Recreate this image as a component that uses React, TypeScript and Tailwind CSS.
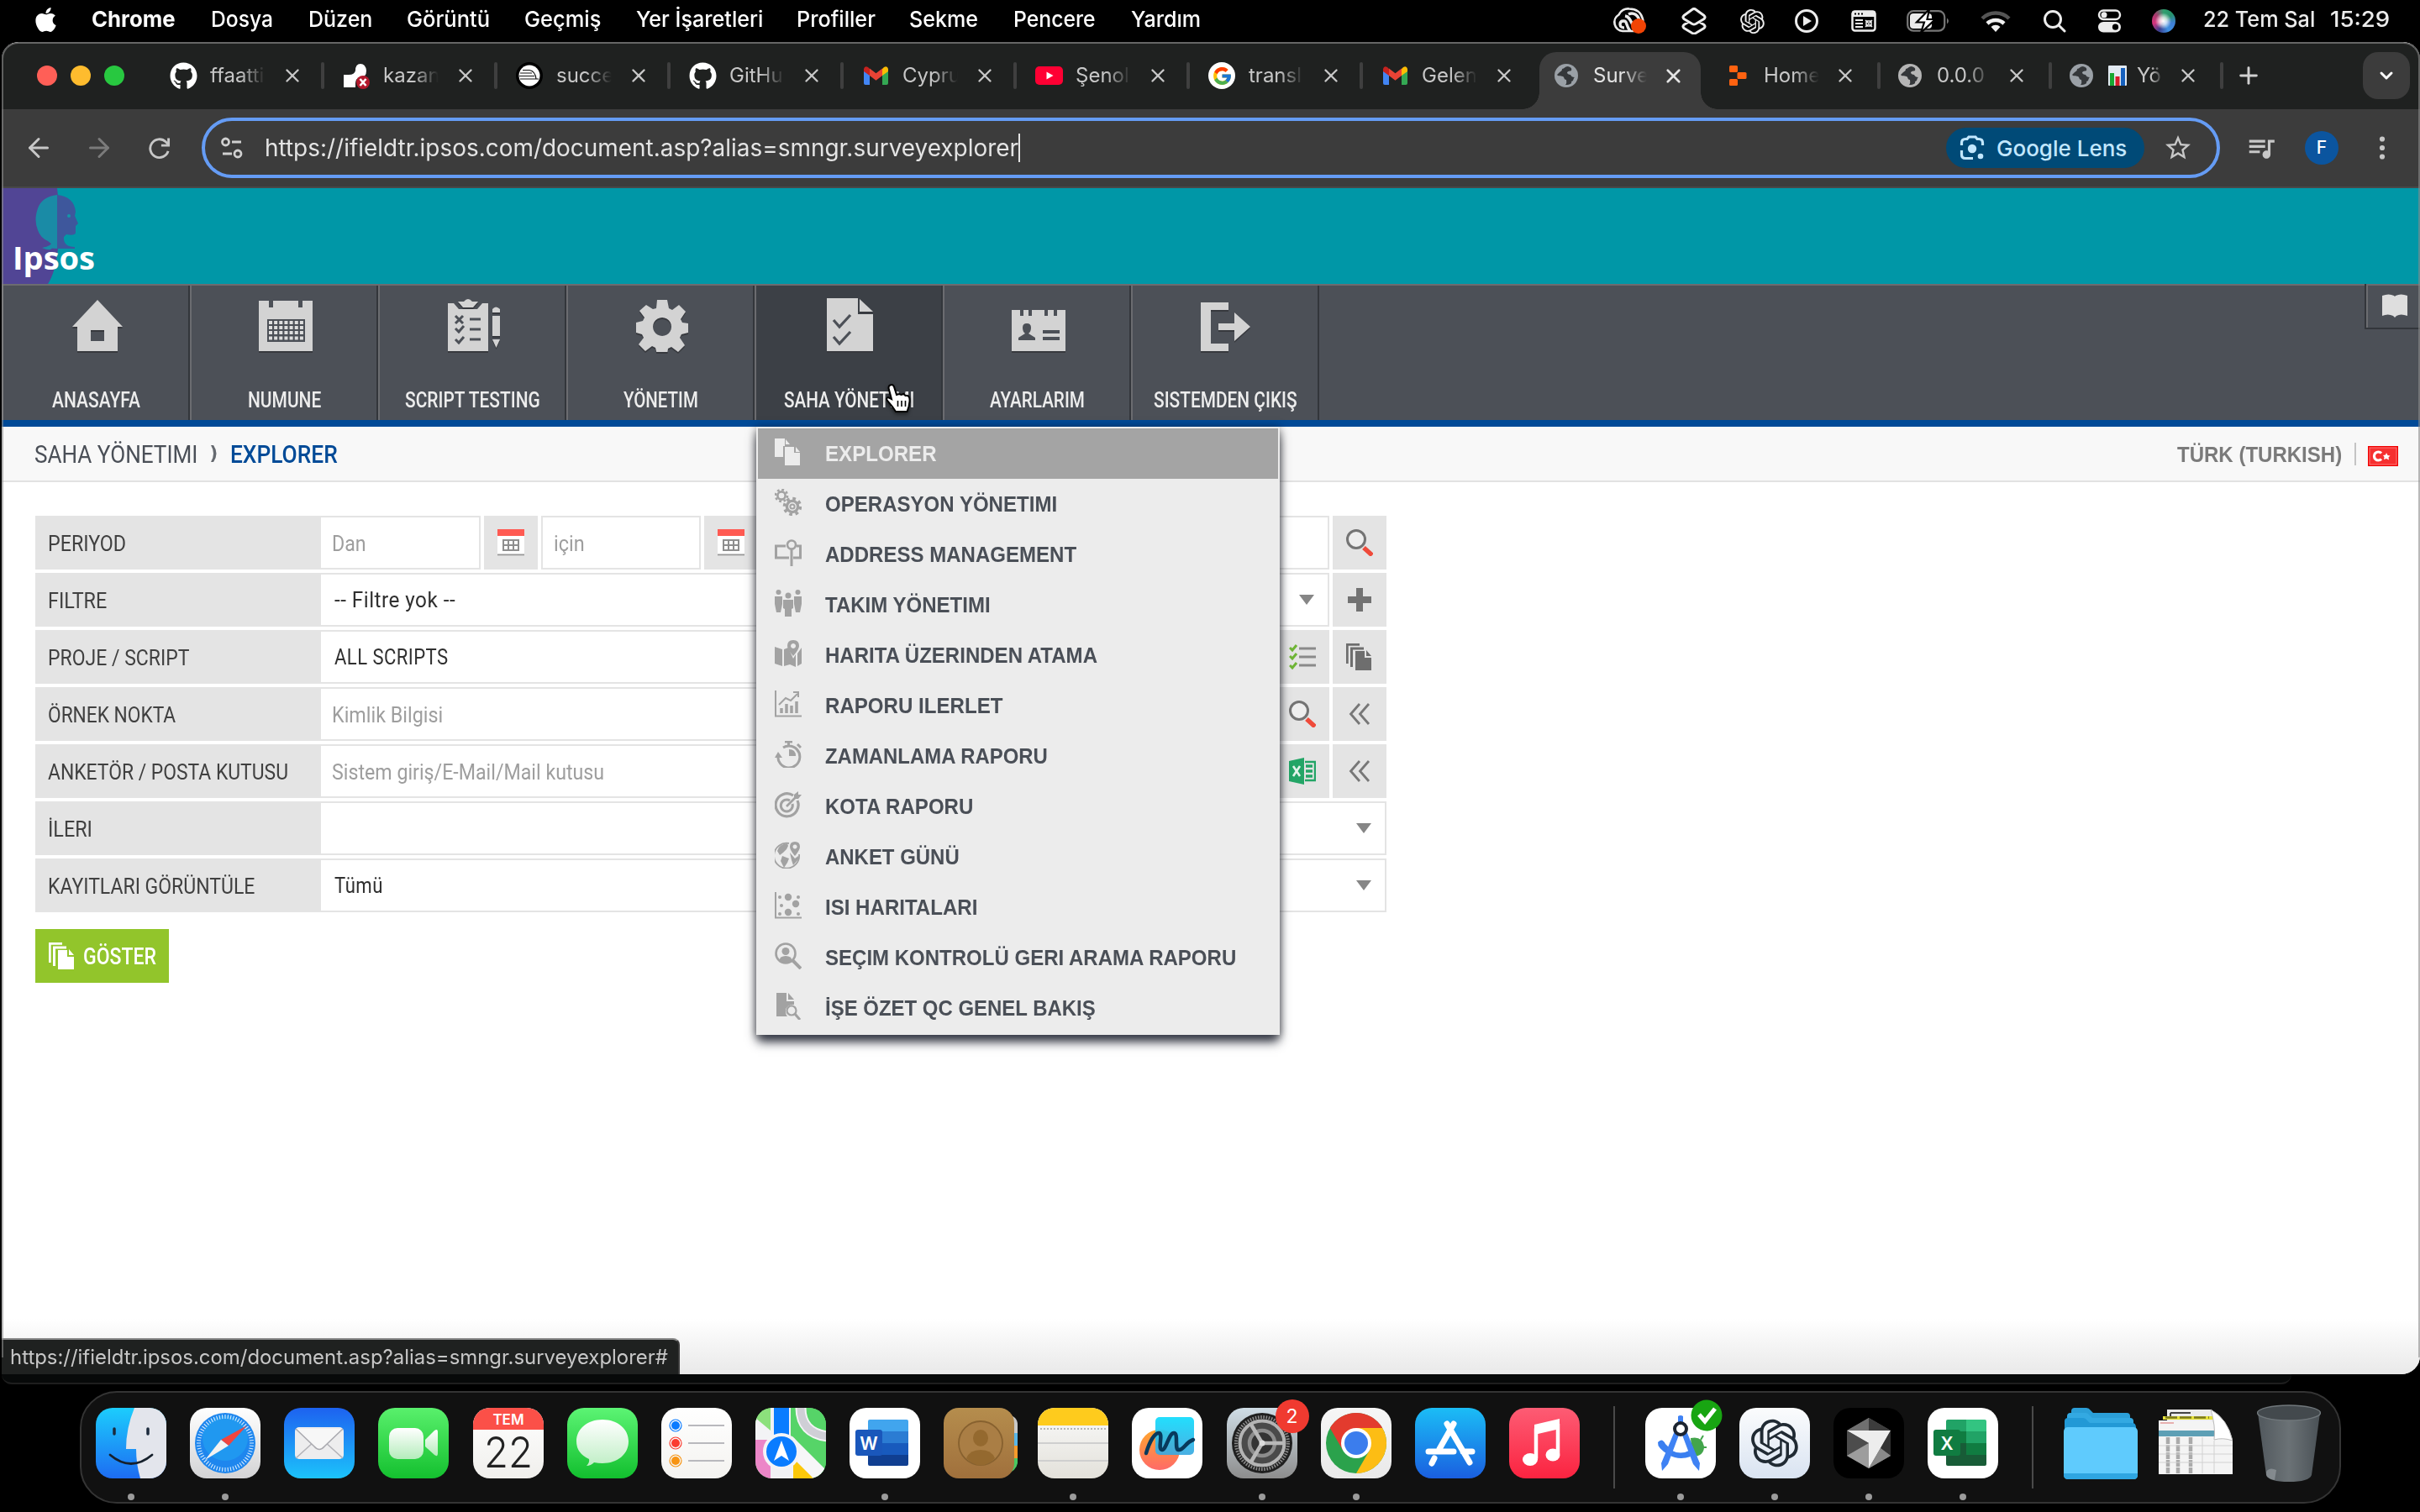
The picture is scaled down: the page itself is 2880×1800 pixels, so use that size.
import { useLayoutEffect, useRef, type ReactNode } from "react";
import { FaApple, FaGithub } from "react-icons/fa";
import { FcGoogle } from "react-icons/fc";
import { MdQueueMusic, MdStarBorder } from "react-icons/md";
import { RiOpenaiFill } from "react-icons/ri";
import { ArrowLeft, ArrowRight, ChevronDown, Plus, X } from "lucide-react";

/* One line of text, condensed or stretched to a given width. */
function T({ w, className = "", children }: { w: number; className?: string; children: ReactNode }) {
  const ref = useRef<HTMLSpanElement>(null);
  useLayoutEffect(() => {
    const el = ref.current;
    if (el) el.style.transform = `scaleX(${w / el.offsetWidth})`;
  }, [w]);
  return (
    <span className={`block shrink-0 ${className}`} style={{ width: w }}>
      <span ref={ref} className="inline-block origin-left whitespace-nowrap">
        {children}
      </span>
    </span>
  );
}

/* ---------- macOS menu bar ---------- */

const menus: [string, number, string][] = [
  ["Chrome", 100, "ml-[38px] font-bold"],
  ["Dosya", 74, "ml-[42px]"],
  ["Düzen", 76, "ml-[42px]"],
  ["Görüntü", 99, "ml-[41px]"],
  ["Geçmiş", 91, "ml-[41px]"],
  ["Yer İşaretleri", 151, "ml-[42px]"],
  ["Profiller", 94, "ml-[40px]"],
  ["Sekme", 82, "ml-[40px]"],
  ["Pencere", 98, "ml-[42px]"],
  ["Yardım", 83, "ml-[42px]"],
];

function MenuBar() {
  return (
    <header className="flex h-[50px] shrink-0 items-center pb-[4px] text-[26px] leading-[40px] font-medium text-white">
      <FaApple className="mt-[1px] ml-[38px] size-[33px] shrink-0" />
      {menus.map(([label, w, cls]) => (
        <T key={label} w={w} className={cls}>
          {label}
        </T>
      ))}
      <div className="mt-[4px] ml-auto flex items-center text-[#ececec]">
        <svg className="h-[34px] w-[42px]" viewBox="0 0 42 34">
          <path d="M12 29a10.500 10.500 0 0 1-4.500-19.500A12 12 0 0 1 20 2.500c9 0 14 5 16 12 2 8-2 14.500-10 14.500z" fill="none" stroke="#eaeaea" strokeWidth="2.600" />
          <path d="M21 29c-6-8-3-12-8-12-3 0-4 2-4 4 0 3 3 4 5 4M27 26c-5-5-5-14-12-15M19 9c6-3 12 1 13 8" fill="none" stroke="#eaeaea" strokeWidth="3.400" />
          <circle cx="31" cy="23" r="9" fill="#f24405" />
        </svg>
        <svg className="ml-[39px] size-[32px]" viewBox="0 0 32 32" fill="none" stroke="currentColor" strokeWidth="3" strokeLinejoin="round">
          <path d="M14 2.200q2-1.500 4 0l10 7.300q2 2 0 4l-10 6q-2 1-4 0l-10-6q-2-2 0-4zM9 17.500l-5 3q-2 2 0 4l10 6q2 1 4 0l10-6q2-2 0-4l-5-3" />
        </svg>
        <RiOpenaiFill className="ml-[36px] size-[35px]" />
        <svg className="ml-[32px] size-[30px]" viewBox="0 0 30 30">
          <circle cx="15" cy="15" r="12.500" fill="none" stroke="currentColor" strokeWidth="3" />
          <path d="M11 9v12l10-6z" fill="currentColor" />
        </svg>
        <svg className="ml-[38px] h-[26px] w-[30px]" viewBox="0 0 30 26">
          <rect x="1.500" y="1.500" width="27" height="23" rx="3" fill="none" stroke="currentColor" strokeWidth="2.500" />
          <path d="M1 3q0-2 2-2h24q2 0 2 2v5H1z" fill="currentColor" />
          <path d="M4 4.500h2m2 0h2m2 0h2" stroke="#000" strokeWidth="2" />
          <path d="M5 12h9M5 16h9M5 20h9" stroke="currentColor" strokeWidth="2.200" />
          <path d="M18 13h6v6h-6zM17 12l8 8m-8 0 8-8" fill="none" stroke="currentColor" strokeWidth="1.500" />
        </svg>
        <svg className="ml-[36px] h-[28px] w-[52px]" viewBox="0 0 52 28">
          <rect x="1.200" y="2.200" width="44" height="23.500" rx="7" fill="none" stroke="#777" strokeWidth="2.200" />
          <path d="M48 10.500q4 3.500 0 7z" fill="#777" />
          <rect x="4" y="5" width="26" height="18" rx="4" fill="currentColor" />
          <path d="M27 0 12 15.500h9L17 28 34 12h-9.500z" fill="#fff" stroke="#000" strokeWidth="2.200" />
        </svg>
        <svg className="ml-[36px] h-[27px] w-[36px]" viewBox="0 0 36 27" fill="none" strokeLinecap="butt" strokeWidth="4.500">
          <path d="M2 10a23 23 0 0 1 32 0" stroke="#555" />
          <path d="M8 16a14.500 14.500 0 0 1 20 0" stroke="#f0f0f0" />
          <path d="M12.500 20a8 8 0 0 1 11 0L18 26z" fill="#f0f0f0" />
        </svg>
        <svg className="ml-[38px] size-[28px]" viewBox="0 0 28 28" fill="none" stroke="currentColor" strokeWidth="3" strokeLinecap="round">
          <circle cx="12" cy="12" r="9.500" />
          <path d="m19 19 7 7" />
        </svg>
        <svg className="ml-[37px] h-[28px] w-[29px]" viewBox="0 0 29 28">
          <rect x="2" y="1.500" width="25" height="10.500" rx="5.200" fill="none" stroke="currentColor" strokeWidth="2.500" />
          <circle cx="8" cy="6.700" r="3.500" fill="currentColor" />
          <rect x="1" y="15" width="27" height="12.500" rx="6.200" fill="currentColor" />
          <circle cx="21.500" cy="21.200" r="3.600" fill="#000" />
        </svg>
        <span className="ml-[36px] size-[28px] rounded-full bg-[radial-gradient(circle_at_48%_50%,#ffffff_0%,rgba(255,255,255,0.7)_22%,transparent_48%),conic-gradient(from_0deg,#2fa06f,#27926c,#3f7fd6,#3f8fe0,#3b3f8f,#d6337c,#a53a6c,#2fa06f)]" />
        <T w={133} className="-mt-[4px] ml-[33px]">22 Tem Sal</T>
        <T w={71} className="-mt-[4px] mr-[36px] ml-[18px]">15:29</T>
      </div>
    </header>
  );
}

/* ---------- Chrome tabs ---------- */

function Globe({ color }: { color: string }) {
  return (
    <svg className="size-[30px]" viewBox="0 0 30 30">
      <circle cx="15" cy="15" r="14" fill={color} />
      <path d="M17 4c-4 0-4 3-7 3 0 3-2 3-3 4l-3 3c1 2 4 1 7 2 2 1 1 4 4 4 0 2 1 4-1 6 6 0 8-2 7-4 3 0 2-4 4-5-3 0-4-1-5-3-2 0-3-1-4-2 0-3 4-2 5-3 1-3-1-4-4-5z" fill="#34373a" />
    </svg>
  );
}
function Gmail() {
  return (
    <svg className="h-[22px] w-[29px]" viewBox="0 0 29 22">
      <path d="M0 3v17q0 2 2 2h5V9z" fill="#4285f4" />
      <path d="M29 3v17q0 2-2 2h-5V9z" fill="#34a853" />
      <path d="M22 3v8l7-5V3q-1-4-5-2z" fill="#fbbc04" />
      <path d="M0 3v3l7 5V3L5 1Q1-1 0 3z" fill="#c5221f" />
      <path d="M7 2.500v8.500l7.500 5.700L22 11V2.500l-7.500 5.700z" fill="#ea4335" />
    </svg>
  );
}

const tabs: { icon: ReactNode; label: string; sep?: boolean }[] = [
  { icon: <FaGithub className="size-[33px] text-white" />, label: "ffaatti", sep: true },
  {
    icon: (
      <svg className="size-[32px]" viewBox="0 0 32 32">
        <path d="M15 10q0-8 6-8t7 8q0 8-7 8-6 1-6 7v5H1V15h6q7 0 8-5z" fill="#fff" />
        <circle cx="24" cy="24" r="8" fill="#b3192c" />
        <path d="m20.500 20 7 8m0-8-7 8" stroke="#fff" strokeWidth="2.600" />
      </svg>
    ),
    label: "kazan",
    sep: true,
  },
  {
    icon: (
      <svg className="size-[32px]" viewBox="0 0 32 32">
        <circle cx="16" cy="16" r="16" fill="#000" />
        <circle cx="16" cy="16" r="12.500" fill="#fff" />
        <path d="M5 13h14M4 16.500h18M5 20h22M8 9.500h8q7 1 8 10.500" fill="none" stroke="#111" strokeWidth="1.200" />
      </svg>
    ),
    label: "succe",
    sep: true,
  },
  { icon: <FaGithub className="size-[33px] text-white" />, label: "GitHu", sep: true },
  { icon: <Gmail />, label: "Cypru", sep: true },
  {
    icon: (
      <svg className="h-[22px] w-[33px]" viewBox="0 0 33 22">
        <rect width="33" height="22" rx="5" fill="#ff0033" />
        <path d="M13.500 6.500v9l8-4.500z" fill="#fff" />
      </svg>
    ),
    label: "Şenol",
    sep: true,
  },
  {
    icon: (
      <span className="flex size-[32px] items-center justify-center rounded-full bg-white">
        <FcGoogle className="size-[25px]" />
      </span>
    ),
    label: "transl",
    sep: true,
  },
  { icon: <Gmail />, label: "Gelen" },
];

function TabText({ children, className = "w-[66px] text-[#c7c7c7]" }: { children: ReactNode; className?: string }) {
  return (
    <span className={`text-[24px] whitespace-nowrap [mask-image:linear-gradient(to_right,black_55%,transparent)] ${className}`}>
      {children}
    </span>
  );
}
function Close() {
  return <X className="size-[26px] shrink-0 text-[#c7c7c7]" strokeWidth={2.2} />;
}

function TabStrip() {
  return (
    <div className="flex h-[78px] shrink-0 items-start bg-[#1f2120]">
      <div className="flex h-[76px] w-[178px] shrink-0 items-center gap-[16px] pl-[42px]">
        <i className="size-[24px] rounded-full bg-[#ff5f57]" />
        <i className="size-[24px] rounded-full bg-[#febc2e]" />
        <i className="size-[24px] rounded-full bg-[#28c840]" />
      </div>
      {tabs.map((t, i) => (
        <div key={i} className="flex h-[76px] w-[206px] shrink-0 items-center pl-[21px]">
          <span className="flex w-[34px] shrink-0 justify-center">{t.icon}</span>
          <span className="ml-[15px] flex w-[66px]">
            <TabText>{t.label}</TabText>
          </span>
          <span className="ml-[19px]">
            <Close />
          </span>
          {t.sep && <i className="ml-auto h-[32px] w-[4px] rounded-sm bg-[#3f3f3f]" />}
        </div>
      ))}
      <div className="relative mt-[10px] mr-[7px] ml-[4px] flex h-[68px] w-[192px] shrink-0 items-center rounded-t-[20px] bg-[#3c3c3c] pb-[12px] pl-[17px]">
        <i className="absolute bottom-0 -left-[20px] size-[20px] bg-[radial-gradient(circle_at_0_0,#1f2120_19.5px,#3c3c3c_20px)]" />
        <i className="absolute -right-[20px] bottom-0 size-[20px] bg-[radial-gradient(circle_at_100%_0,#1f2120_19.5px,#3c3c3c_20px)]" />
        <Globe color="#9aa0a6" />
        <TabText className="ml-[17px] w-[64px] text-[#e3e3e3]">Surve</TabText>
        <X className="ml-[18px] size-[27px] text-[#e3e3e3]" strokeWidth={2.4} />
      </div>
      <div className="flex h-[76px] w-[207px] shrink-0 items-center pl-[27px]">
        <svg className="h-[24px] w-[21px]" viewBox="0 0 21 24" fill="#ff6210">
          <rect width="10" height="8" rx="1.500" />
          <rect x="9.500" y="8" width="11" height="8" rx="1.500" />
          <rect y="16" width="10" height="8" rx="1.500" />
        </svg>
        <TabText className="ml-[20px] w-[66px] text-[#c7c7c7]">Home</TabText>
        <span className="ml-[18px]"><Close /></span>
        <i className="ml-auto h-[32px] w-[4px] rounded-sm bg-[#3f3f3f]" />
      </div>
      <div className="flex h-[76px] w-[204px] shrink-0 items-center pl-[20px]">
        <Globe color="#b5b5b5" />
        <TabText className="ml-[17px] w-[65px] text-[#c7c7c7]">0.0.0</TabText>
        <span className="ml-[17px]"><Close /></span>
        <i className="ml-auto h-[32px] w-[4px] rounded-sm bg-[#3f3f3f]" />
      </div>
      <div className="flex h-[76px] w-[204px] shrink-0 items-center pl-[20px]">
        <Globe color="#9aa0a6" />
        <svg className="ml-[17px] h-[24px] w-[22px]" viewBox="0 0 22 24">
          <rect width="22" height="24" rx="1" fill="#e2eaf2" />
          <path d="M2 9h5v15H2z" fill="#17a832" />
          <path d="M8.500 13h5v11h-5z" fill="#d81b2a" />
          <path d="M15 3h5v21h-5z" fill="#1560bd" />
        </svg>
        <TabText className="ml-[12px] w-[31px] text-[#c7c7c7]">Yö</TabText>
        <span className="ml-[17px]"><Close /></span>
        <i className="ml-auto h-[32px] w-[4px] rounded-sm bg-[#3f3f3f]" />
      </div>
      <div className="flex h-[76px] items-center pl-[14px]">
        <Plus className="size-[32px] text-[#d0d0d0]" strokeWidth={2.2} />
      </div>
      <div className="mt-[10px] mr-[12px] ml-auto flex size-[56px] items-center justify-center rounded-[18px] bg-[#3c3c3c]">
        <ChevronDown className="size-[24px] text-white" strokeWidth={3} />
      </div>
    </div>
  );
}

function Toolbar() {
  return (
    <div className="flex h-[94px] shrink-0 items-center border-b-2 border-[#484848] bg-[#3c3c3c] text-[#c7c7c7]">
      <ArrowLeft className="ml-[26px] size-[36px]" strokeWidth={2} />
      <ArrowRight className="ml-[36px] size-[36px] text-[#7b7b7b]" strokeWidth={2} />
      <svg className="ml-[40px] size-[27px]" viewBox="0 0 28 28" fill="none" stroke="currentColor" strokeWidth="3">
        <path d="M25 17.500A11.300 11.300 0 1 1 22 6l3 3" />
        <path d="M25.500 1.500v9h-9" />
      </svg>
      <div className="ml-[37px] flex h-[72px] w-[2402px] shrink-0 items-center rounded-full border-4 border-[#659cf5]">
        <svg className="ml-[19px] size-[26px]" viewBox="0 0 26 26" fill="none" stroke="#d0d0d0" strokeWidth="2.800">
          <circle cx="5.500" cy="6" r="4" />
          <path d="M13 6h11M2 20h11" />
          <circle cx="20" cy="20" r="4" />
        </svg>
        <T w={897} className="mt-[0px] ml-[26px] text-[28px] text-[#e4e4e4]">
          https://ifieldtr.ipsos.com/document.asp?alias=smngr.surveyexplorer
        </T>
        <i className="h-[34px] w-[2px] bg-[#e4e4e4]" />
        <div className="ml-auto flex h-[48px] w-[236px] items-center rounded-[24px] bg-[#004a77] text-[#c2e7ff]">
          <svg className="ml-[16px] size-[30px]" viewBox="0 0 30 30" fill="none" stroke="currentColor" strokeWidth="3.200">
            <path d="M2.500 12V9q0-4.500 4.500-4.500h2L11 2h8l2 2.500h2q4.500 0 4.500 4.500v3M2.500 18v5q0 4.500 4.500 4.500h9" />
            <circle cx="15" cy="16" r="5.200" fill="currentColor" stroke="none" />
            <circle cx="25" cy="25" r="3.300" fill="currentColor" stroke="none" />
          </svg>
          <T w={155} className="ml-[14px] text-[26px] font-medium">Google Lens</T>
        </div>
        <MdStarBorder className="mr-[28px] ml-[22px] size-[36px]" />
      </div>
      <MdQueueMusic className="ml-[30px] size-[38px]" />
      <span className="ml-[33px] flex size-[40px] items-center justify-center rounded-full bg-[#0b559f] text-[21px] font-medium text-white">F</span>
      <svg className="ml-[48px] h-[28px] w-[8px]" viewBox="0 0 8 28" fill="currentColor">
        <circle cx="4" cy="3.500" r="3.100" />
        <circle cx="4" cy="14" r="3.100" />
        <circle cx="4" cy="24.500" r="3.100" />
      </svg>
    </div>
  );
}

/* ---------- Ipsos header and navigation ---------- */

function IpsosHeader() {
  return (
    <div className="flex h-[116px] shrink-0 border-b-2 border-[#6c6c70] bg-[#0097a7]">
      <svg className="h-[114px] w-[116px]" viewBox="0 0 116 114">
        <path d="M0 0h66q5 40 1 72-3 28-12 42H0z" fill="#514595" />
        <path d="M66 8Q48 10 43 24q-5 14 0 26 3 9 12 13l5 4q2 10-12 4h19z" fill="#1a8ba6" />
        <path d="M48 71q12-2 12-8h7v9z" fill="#1a8ba6" />
        <path d="M66 8q20 2 22 20l-1 5 4 9-3 3v8q-1 4-11 2l-3 3q-1 12 13 12v2H66z" fill="#3e579c" />
        <circle cx="80" cy="33" r="2" fill="#1497a8" />
        <text x="13" y="97" fontFamily="'Open Sans'" fontWeight="700" fontSize="38" fill="#fff" textLength="98" lengthAdjust="spacingAndGlyphs">Ipsos</text>
      </svg>
    </div>
  );
}

const etched = "[filter:drop-shadow(0_2px_0_#37393e)]";
const navItems: { label: string; w: number; art: ReactNode }[] = [
  { label: "ANASAYFA", w: 105, art: <path fillRule="evenodd" d="M32 2 2 34h6v29h48V34h6zM24 38h16v13H24z" /> },
  {
    label: "NUMUNE",
    w: 87,
    art: (
      <>
        <path d="M0 3h12v8h5V3h30v8h5V3h12v60H0z" />
        <path d="M10 25h45v27H10z" fill="#4c5057" />
        <path d="M12 29h41M12 35h41M12 41h41M12 47.500h41" stroke="#dedede" strokeWidth="4" strokeDasharray="4 2.150" />
      </>
    ),
  },
  {
    label: "SCRIPT TESTING",
    w: 161,
    art: (
      <>
        <path d="M1 6h7l6 7h22l6-7h7v57H1z" />
        <path d="M20 4q5-6 10 0h7l-6 7H19l-6-7z" />
        <path d="m10 21 9 9m0-9-9 9m0 6 4 4 6-7m-10 16 4 4 6-7M27 25h13M27 37h13M27 49h13" fill="none" stroke="#4c5057" strokeWidth="3" />
        <path d="M54 17v-4q4-5 9 0v4zM54 21h9v24h-9zM54 49h9l-4.500 10z" />
      </>
    ),
  },
  {
    label: "YÖNETIM",
    w: 89,
    art: (
      <path
        fillRule="evenodd"
        d="m26 2 12 0 2 10 4 2 8-6 8 8-6 9 2 4 7 1v11l-8 2-2 4 6 9-8 8-8-6-4 2-1 7H26l-2-8-4-2-8 6-8-8 6-8-2-4-7-2V29l8-2 2-4-6-8 8-7 8 5 4-1zM32 23a11 11 0 1 0 .1 0z"
      />
    ),
  },
  {
    label: "SAHA YÖNETIMI",
    w: 155,
    art: (
      <>
        <path d="M4 0h37v19h18v44H4z" />
        <path d="M43 1v15h16z" />
        <path d="m12 26 7 8 13-14m-20 26 7 8 13-14" fill="none" stroke="#4c5057" strokeWidth="3.200" />
      </>
    ),
  },
  {
    label: "AYARLARIM",
    w: 113,
    art: (
      <>
        <path d="M0 14h10v7h4v-7h6v7h4v-7h15v7h4v-7h7v7h4v-7h10v49H0z" />
        <path d="M18 30q5 0 5 5t-3 7l8 5v3H8v-3l8-5q-3-2-3-7t5-5zM37 38h20v4H37zM37 46h20v4H37z" fill="#4c5057" />
      </>
    ),
  },
  {
    label: "SISTEMDEN ÇIKIŞ",
    w: 171,
    art: (
      <>
        <path d="M1 5h33v9H13v40h21v9H1z" />
        <path d="M22 30h19V17l19 17-19 17V38H22z" />
      </>
    ),
  },
];

function NavIcon({ art }: { art: ReactNode }) {
  return (
    <svg className={`-mt-[1px] mb-[1px] ml-[4px] size-[64px] ${etched}`} viewBox="0 0 64 64" fill="#d3d3d3">
      {art}
    </svg>
  );
}

const S = { fill: "none", stroke: "#a2a2a2", strokeWidth: 2.6 };
const menuItems: { label: string; w: number; art: ReactNode }[] = [
  {
    label: "EXPLORER", w: 133,
    art: (
      <g fill="#ececec">
        <path d="M0 0h12v9h-2v13H0z" />
        <path d="M13 1l5 6h-5zM12 10h11v7h7v15H12z" />
        <path d="M25 10l5 6h-5z" />
      </g>
    ),
  },
  {
    label: "OPERASYON YÖNETIMI", w: 276,
    art: (
      <g {...S}>
        <circle cx="8" cy="8" r="4.600" />
        <circle cx="8" cy="8" r="7" strokeDasharray="2.800 2.700" />
        <circle cx="21" cy="21" r="6.600" strokeWidth="3.400" />
        <circle cx="21" cy="21" r="2.600" strokeWidth="2" />
        <circle cx="21" cy="21" r="9.500" strokeDasharray="3.700 3.760" strokeWidth="3.500" />
      </g>
    ),
  },
  {
    label: "ADDRESS MANAGEMENT", w: 299,
    art: (
      <g {...S}>
        <path d="M13 8H1.500v14H17M26 8h4.500v14H22M20 12v20" strokeWidth="3" />
        <circle cx="20" cy="6.500" r="5" />
      </g>
    ),
  },
  {
    label: "TAKIM YÖNETIMI", w: 197,
    art: (
      <g fill="#a2a2a2">
        <circle cx="4.500" cy="3" r="3" />
        <circle cx="27.500" cy="3" r="3" />
        <circle cx="16" cy="7" r="3.500" />
        <path d="M0 8h9v9l-2 10H2L0 17zM23 8h9v9l-2 10h-5l-2-10zM10 12h12v10l-2 1v9h-8v-9l-2-1z" />
      </g>
    ),
  },
  {
    label: "HARITA ÜZERINDEN ATAMA", w: 324,
    art: (
      <g fill="#a2a2a2">
        <path d="M0 8l9 3v20l-9-3zM11 11l5-2 6 13 3-5v15l-7-3-7 2zM27 16l5-7v19l-5 3z" />
        <path fillRule="evenodd" d="M22 0q7 0 7 7 0 4-7 12-7-8-7-12 0-7 7-7zm0 4a3 3 0 1 0 .1 0z" />
      </g>
    ),
  },
  {
    label: "RAPORU ILERLET", w: 211,
    art: (
      <g {...S}>
        <path d="M1 0v30.500h31" strokeWidth="2" />
        <path d="M8 27v-6m6 6V16m6 11V18m6 9V13" strokeWidth="3.500" />
        <path d="M5 17l8-8 6 3 8-8M22 2h6v6" strokeWidth="2" />
      </g>
    ),
  },
  {
    label: "ZAMANLAMA RAPORU", w: 265,
    art: (
      <g {...S}>
        <path d="M4 17a13 13 0 1 0 13-11q-4 0-7 2M12 1h9M16.500 1v5M27 4l4 4" strokeWidth="3" />
        <path d="M17 10v8h8q0-8-8-8z" fill="#a2a2a2" stroke="none" />
        <path d="M0 20l4-7 5 7z" fill="#a2a2a2" stroke="none" />
      </g>
    ),
  },
  {
    label: "KOTA RAPORU", w: 176,
    art: (
      <g {...S}>
        <path d="M22 5A13.500 13.500 0 1 0 27 11" strokeWidth="3.200" />
        <path d="M18 11a7 7 0 1 0 3 4" strokeWidth="3" />
        <path d="M14 18 25 7" />
        <path d="M23 9V4l5-4v4h4l-4 5z" fill="#a2a2a2" stroke="none" />
      </g>
    ),
  },
  {
    label: "ANKET GÜNÜ", w: 160,
    art: (
      <g fill="#a2a2a2">
        <path d="M17 2A15 15 0 1 0 29 15" fill="none" stroke="#a2a2a2" strokeWidth="1.800" />
        <path d="M15 2q-10 1-12 9l3 5 4-3 4-4 2-4zM9 17l8 3-2 5-4 6-4-8zM18 13l6 7 4-3 1 3-7 8-2-6z" />
        <path fillRule="evenodd" d="M24 0q6 0 6 6 0 4-6 11-6-7-6-11 0-6 6-6zm0 3.500a2.500 2.500 0 1 0 .1 0z" />
      </g>
    ),
  },
  {
    label: "ISI HARITALARI", w: 181,
    art: (
      <g fill="#a2a2a2">
        <path d="M1 0v30.500h31" fill="none" stroke="#a2a2a2" strokeWidth="2" />
        <circle cx="16" cy="6" r="4.200" />
        <circle cx="25" cy="14" r="4.200" />
        <circle cx="16" cy="24" r="4.200" />
        <circle cx="6" cy="6" r="2" />
        <circle cx="28" cy="6" r="2" />
        <circle cx="8" cy="16" r="2" />
        <circle cx="6" cy="26" r="2" />
        <circle cx="28" cy="26" r="2" />
      </g>
    ),
  },
  {
    label: "SEÇIM KONTROLÜ GERI ARAMA RAPORU", w: 489,
    art: (
      <g {...S}>
        <circle cx="13" cy="13" r="11.500" />
        <path d="m21 21 10 10" strokeWidth="4" />
        <circle cx="13" cy="10.500" r="4.500" fill="#a2a2a2" stroke="none" />
        <path d="M5 22q1-6 8-6t8 6q-8 6-16 0z" fill="#a2a2a2" stroke="none" />
      </g>
    ),
  },
  {
    label: "İŞE ÖZET QC GENEL BAKIŞ", w: 322,
    art: (
      <g fill="#a2a2a2">
        <path d="M2 0h12v10h9v4q-10 0-10 8 0 4 2 6H2zM16 0l7 8h-7z" />
        <circle cx="20" cy="21" r="5.500" fill="none" stroke="#a2a2a2" strokeWidth="2.200" />
        <path d="m24 25 6 7" stroke="#a2a2a2" strokeWidth="3" />
      </g>
    ),
  },
];

function Dropdown() {
  return (
    <div className="absolute top-[168px] left-0 z-20 w-[623px] border-2 border-[#ececec] bg-[#ececec] shadow-[0_10px_12px_-2px_#343845,0_2px_10px_0_rgba(0,0,0,0.55)]">
      {menuItems.map((m, i) => (
        <div key={m.label} className={i === 0 ? "flex h-[60px] items-center bg-[#a4a4a4] text-[#ececec]" : "flex h-[60px] items-center text-[#4a4f57]"}>
          <svg className="-mt-[4px] ml-[20px] size-[32px]" viewBox="0 0 32 32">{m.art}</svg>
          <T w={m.w} className="ml-[28px] font-['Liberation_Sans',sans-serif] text-[25px] leading-[36px] font-bold">{m.label}</T>
        </div>
      ))}
    </div>
  );
}

function HandCursor() {
  return (
    <svg className="absolute top-[116px] left-[153px] z-30 h-[38px] w-[34px] [filter:drop-shadow(0_2px_2px_rgba(0,0,0,.5))]" viewBox="0 0 34 38">
      <path
        d="M6.500 2.500q3-1.500 4.500 2l3 9.500 3-1 2.500 1 3-1 2 2 2.500 0q3 1 2.500 7l-1 6-2 6H13l-4-6-6-7q-2-3 1-4l4 2L4.500 6q0-3 2-3.500z"
        fill="#fff" stroke="#000" strokeWidth="2"
      />
      <path d="M15.500 21v7m4.500-7v7m4.500-7v7" stroke="#000" strokeWidth="1.600" />
    </svg>
  );
}

function Nav() {
  return (
    <nav className="flex h-[168px] shrink-0 border-b-8 border-[#004a97] bg-[#4c5057]">
      {navItems.map((n, i) => (
        <div
          key={n.label}
          className={`relative flex h-[160px] w-[224px] shrink-0 flex-col items-center border-r-2 border-l-2 border-r-[#33363b] border-l-[#6b6c70] pt-[16px] ${i === 4 ? "bg-[#3c4046]" : ""}`}
        >
          <NavIcon art={n.art} />
          <T w={n.w} className="mt-[36px] font-['Roboto',sans-serif] text-[26px] leading-[40px] font-medium text-[#ededed]">{n.label}</T>
          {i === 4 && <Dropdown />}
          {i === 4 && <HandCursor />}
        </div>
      ))}
      <div className="-mt-[2px] ml-auto flex h-[54px] w-[66px] items-center border-b-2 border-l-2 border-[#33363b]">
        <i className="h-full w-[2px] bg-[#6b6c70]" />
        <svg className="ml-[16px] h-[30px] w-[32px]" viewBox="0 0 32 30">
          <path d="M1 3q8-3 14 0l1 1 1-1q6-3 14 0v24q-8-3-13 0l-2 2-2-2q-6-3-13 0z" fill="#dedede" />
        </svg>
      </div>
    </nav>
  );
}

function Breadcrumb() {
  return (
    <div className="flex h-[66px] shrink-0 items-center border-b-2 border-[#e2e2e2] bg-[#f8f8f8] font-['Roboto',sans-serif] text-[30px]">
      <T w={194} className="ml-[39px] text-[#4a4f57]">SAHA YÖNETIMI</T>
      <svg className="ml-[15px] h-[22px] w-[9px]" viewBox="0 0 9 22">
        <path d="M1 1q6 10 0 20h3q7-10 0-20z" fill="#666a70" />
      </svg>
      <T w={128} className="ml-[15px] font-medium text-[#004a97]">EXPLORER</T>
      <T w={196} className="mt-[4px] ml-auto font-['Liberation_Sans',sans-serif] text-[25px] font-bold text-[#7b7b7b]">TÜRK (TURKISH)</T>
      <i className="ml-[15px] h-[27px] w-[2px] bg-[#c4c4c4]" />
      <svg className="mt-[5px] mr-[26px] ml-[14px] h-[24px] w-[36px]" viewBox="0 0 36 24">
        <rect width="36" height="24" fill="#f00000" />
        <rect x="2" y="2" width="32" height="20" fill="#f63030" stroke="#ff7070" strokeWidth="1.200" />
        <path d="M16 8.500a5 5 0 1 0 0 7" fill="none" stroke="#fff" strokeWidth="3.200" />
        <path d="m22 8 1.500 3 3 .5-2 2 .5 3-3-1.500-3 1 .5-3-1.500-2 3-.5z" fill="#fff" />
      </svg>
    </div>
  );
}

/* ---------- Filter form ---------- */

function Label({ w, children }: { w: number; children: ReactNode }) {
  return (
    <div className="flex h-[64px] w-[338px] shrink-0 items-center bg-[#e4e4e4] pt-[2px] pl-[15px] text-[26px] text-[#404040]">
      <T w={w}>{children}</T>
    </div>
  );
}
function Field({ className = "flex-1", text, w = 0, hint = false, arrow = false }: { className?: string; text?: string; w?: number; hint?: boolean; arrow?: boolean }) {
  return (
    <div className={`flex h-[64px] items-center border-2 border-[#e4e4e4] bg-white text-[26px] ${className}`}>
      {text && <T w={w} className={hint ? "mt-[2px] ml-[13px] text-[#9e9e9e]" : "ml-[16px] tracking-[0.5px] text-[#303030]"}>{text}</T>}
      {arrow && (
        <svg className="mr-[16px] ml-auto h-[12px] w-[18px]" viewBox="0 0 18 12">
          <path d="M0 0h18L9 12z" fill="#868686" />
        </svg>
      )}
    </div>
  );
}
function Btn({ children }: { children: ReactNode }) {
  return <div className="ml-[4px] flex size-[64px] shrink-0 items-center justify-center bg-[#e4e4e4]">{children}</div>;
}
function CalIcon() {
  return (
    <svg className="size-[32px]" viewBox="0 0 32 32">
      <path d="M0 8h32v24H0z" fill="#fff" />
      <path d="M0 0h32v8H0z" fill="#ff5a52" />
      <path d="M0 30.500h32" stroke="#999" strokeWidth="2" />
      <path d="M7 13h18v12H7zM13 13v12M19 13v12M7 19h18" fill="none" stroke="#8e8e8e" strokeWidth="2" />
    </svg>
  );
}
function SearchIcon() {
  return (
    <svg className="size-[32px]" viewBox="0 0 32 32">
      <circle cx="12" cy="12" r="10.500" fill="#eee" stroke="#747474" strokeWidth="3" />
      <path d="m21 22 10 9" stroke="#ef4a3a" strokeWidth="5.500" />
    </svg>
  );
}
function StackIcon({ color }: { color: string }) {
  return (
    <svg className="size-[32px]" viewBox="0 0 32 32">
      <path d="M1.200 24V1.200H16M6.500 28V6H21" fill="none" stroke={color} strokeWidth="3" />
      <path d="M11 9h11v8h8v15H11zM24 8l6 7h-6z" fill={color} />
    </svg>
  );
}
function Back() {
  return (
    <svg className="h-[26px] w-[26px]" viewBox="0 0 26 26" fill="none" stroke="#777" strokeWidth="2.800">
      <path d="M13 1 2.500 13 13 25M24 1 13.500 13 24 25" />
    </svg>
  );
}

function FilterForm() {
  return (
    <div className="ml-[40px] flex w-[1608px] flex-col gap-[4px] pt-[40px] font-['Roboto',sans-serif]">
      <div className="flex">
        <Label w={93}>PERIYOD</Label>
        <Field className="w-[192px]" text="Dan" w={41} hint />
        <Btn><CalIcon /></Btn>
        <Field className="ml-[4px] w-[190px]" text="için" w={37} hint />
        <Btn><CalIcon /></Btn>
        <Field className="ml-[4px] flex-1" />
        <Btn><SearchIcon /></Btn>
      </div>
      <div className="flex">
        <Label w={70}>FILTRE</Label>
        <Field text="-- Filtre yok --" w={144} arrow />
        <Btn>
          <svg className="size-[28px]" viewBox="0 0 28 28"><path d="M10 0h8v10h10v8H18v10h-8V18H0v-8h10z" fill="#727272" /></svg>
        </Btn>
      </div>
      <div className="flex">
        <Label w={168}>PROJE / SCRIPT</Label>
        <Field text="ALL SCRIPTS" w={136} />
        <Btn>
          <svg className="size-[32px]" viewBox="0 0 32 32" fill="none">
            <path d="m1 5 3 3 5-6M1 15l3 3 5-6M1 26l3 3 5-6" stroke="#6fb536" strokeWidth="3" />
            <path d="M12 6h20M12 16h20M12 26h20" stroke="#8a8a8a" strokeWidth="2.800" />
          </svg>
        </Btn>
        <Btn><StackIcon color="#6e6e6e" /></Btn>
      </div>
      <div className="flex">
        <Label w={152}>ÖRNEK NOKTA</Label>
        <Field text="Kimlik Bilgisi" w={132} hint />
        <Btn><SearchIcon /></Btn>
        <Btn><Back /></Btn>
      </div>
      <div className="flex">
        <Label w={286}>ANKETÖR / POSTA KUTUSU</Label>
        <Field text="Sistem giriş/E-Mail/Mail kutusu" w={324} hint />
        <Btn>
          <svg className="size-[32px]" viewBox="0 0 32 32">
            <path d="M0 4 18 0v32L0 28z" fill="#23a566" />
            <path d="M19 5h12v22H19" fill="none" stroke="#23a566" strokeWidth="2.500" />
            <path d="M20 10h8m-8 6h8m-8 6h8" stroke="#23a566" strokeWidth="3.500" />
            <path d="m5 10 8 12m0-12L5 22" stroke="#e4f3ea" strokeWidth="2.600" />
          </svg>
        </Btn>
        <Btn><Back /></Btn>
      </div>
      <div className="flex">
        <Label w={53}>İLERI</Label>
        <Field arrow />
      </div>
      <div className="flex">
        <Label w={246}>KAYITLARI GÖRÜNTÜLE</Label>
        <Field text="Tümü" w={58} arrow />
      </div>
      <div className="mt-[16px] flex h-[64px] w-[159px] items-center bg-[#92c52b] pl-[16px] text-[27px] text-white">
        <StackIcon color="#ffffff" />
        <T w={87} className="mt-[2px] ml-[9px] font-medium">GÖSTER</T>
      </div>
    </div>
  );
}

/* ---------- Dock ---------- */

function Grad({ id, a, b }: { id: string; a: string; b: string }) {
  return (
    <linearGradient id={id} x1="0" y1="0" x2="0" y2="1">
      <stop offset="0" stopColor={a} />
      <stop offset="1" stopColor={b} />
    </linearGradient>
  );
}
function App84({ id, a, b, children }: { id: string; a: string; b: string; children?: ReactNode }) {
  return (
    <svg className="size-[84px]" viewBox="0 0 84 84">
      <defs>
        <Grad id={`${id}-bg`} a={a} b={b} />
        <clipPath id={`${id}-clip`}><rect width="84" height="84" rx="20" /></clipPath>
      </defs>
      <g clipPath={`url(#${id}-clip)`}>
        <rect width="84" height="84" fill={`url(#${id}-bg)`} />
        {children}
      </g>
    </svg>
  );
}
const ticks = Array.from({ length: 60 }, (_, i) => i * 6);

const mainApps: { dot?: boolean; badge?: string; art: ReactNode }[] = [
  {
    dot: true,
    art: (
      <App84 id="finder" a="#1ccdfd" b="#1d6cf2">
        <path d="M46 0Q36 24 36 49h12q0 18 5 35h31V0z" fill="#e3e5ec" />
        <path d="M22 25v6M62 25v6" stroke="#1b2a3c" strokeWidth="3.500" strokeLinecap="round" />
        <path d="M17 56q25 21 50 0" fill="none" stroke="#16202c" strokeWidth="2.800" strokeLinecap="round" />
      </App84>
    ),
  },
  {
    dot: true,
    art: (
      <App84 id="safari" a="#ffffff" b="#d3d3d5">
        <circle cx="42" cy="42" r="36" fill="#1e86ee" />
        <circle cx="42" cy="36" r="27" fill="#22a5f2" opacity=".6" />
        {ticks.map((t) => (
          <path key={t} d="M42 8v5" stroke="#d6ebff" strokeWidth="1.100" transform={`rotate(${t} 42 42)`} />
        ))}
        <path d="M68 21 37 38l9 7z" fill="#f0453f" />
        <path d="M18 62 37 38l9 7z" fill="#f2f2f2" />
      </App84>
    ),
  },
  {
    art: (
      <App84 id="mail" a="#1d62f0" b="#1cc3fb">
        <rect x="13" y="23" width="58" height="38" rx="5" fill="#ededee" />
        <path d="m14 60 22-20M70 60 48 40" stroke="#b3b3b8" strokeWidth="1.600" />
        <path d="m14 25 22 21q6 7 12 0l22-21" fill="#f7f7f7" stroke="#aaaab0" strokeWidth="1.600" />
      </App84>
    ),
  },
  {
    art: (
      <App84 id="facetime" a="#59f06c" b="#14c02f">
        <defs><Grad id="cam" a="#ffffff" b="#b4ecbb" /></defs>
        <rect x="13" y="24" width="41" height="37" rx="10" fill="url(#cam)" />
        <path d="M56 38 67 27q4-3 4 2v25q0 5-4 2L56 46z" fill="url(#cam)" />
      </App84>
    ),
  },
  {
    art: (
      <App84 id="cal" a="#ffffff" b="#f0efec">
        <path d="M0 0h84v26H0z" fill="#fb5048" />
        <text x="42" y="20" textAnchor="middle" fontFamily="Inter" fontWeight="600" fontSize="17" fill="#fff">TEM</text>
        <text x="42" y="71" textAnchor="middle" fontFamily="Inter" fontWeight="300" fontSize="51" fill="#222" textLength="58" lengthAdjust="spacingAndGlyphs">22</text>
      </App84>
    ),
  },
  {
    art: (
      <App84 id="messages" a="#5cf474" b="#12bf2e">
        <defs><Grad id="bubble" a="#ffffff" b="#bfeec5" /></defs>
        <path d="M42 14c18 0 31 11 31 26S60 66 42 66q-5 0-10-1-4 4-9 4 4-4 3-8Q11 54 11 40C11 25 24 14 42 14z" fill="url(#bubble)" />
      </App84>
    ),
  },
  {
    art: (
      <App84 id="reminders" a="#ffffff" b="#f4f3f0">
        {["#0a7bff", "#fb3b30", "#f79413"].map((c, i) => (
          <g key={c}>
            <circle cx="17" cy={21 + i * 21} r="5" fill={c} />
            <circle cx="17" cy={21 + i * 21} r="7" fill="none" stroke={c} strokeWidth="1.200" />
            <path d={`M32 ${21 + i * 21}h43`} stroke="#b9b9bd" strokeWidth="2" />
          </g>
        ))}
      </App84>
    ),
  },
  {
    art: (
      <App84 id="maps" a="#74de7a" b="#3ecb55">
        <path d="M0 0h22v35L0 22z" fill="#8ce07c" />
        <path d="m0 12 24 20v10L0 38z" fill="#f3f3f5" />
        <path d="M0 38h20v46H0z" fill="#ec86c8" />
        <path d="M18 0h32v84H18z" fill="#f1f1f4" />
        <path d="M42 0h42v84L42 34z" fill="#56d468" />
        <path d="M22 0h18v40H22z" fill="#0a7cff" />
        <path d="M54 0q0 30 32 34" fill="none" stroke="#f4f4f6" strokeWidth="13" />
        <path d="M54 0q0 30 32 34" fill="none" stroke="#cfcfd6" strokeWidth="9" />
        <path d="m44 34 42 42v10H44z" fill="#f6f6f8" />
        <path d="M45 60l24 24H45z" fill="#fcc80a" />
        <circle cx="31" cy="52" r="22" fill="#f4f4f6" />
        <circle cx="31" cy="52" r="18" fill="#0a7cff" />
        <path d="m31 39 9 24-9-6-9 6z" fill="#fff" />
      </App84>
    ),
  },
  {
    dot: true,
    art: (
      <App84 id="word" a="#ffffff" b="#ffffff">
        <path d="M22 16q0-2 2-2h44q2 0 2 2v12H22z" fill="#41a5ee" />
        <path d="M22 28h48v14H22z" fill="#2b7cd3" />
        <path d="M22 42h48v14H22z" fill="#185abd" />
        <path d="M22 56h48v11q0 2-2 2H24q-2 0-2-2z" fill="#103f91" />
        <rect x="7" y="26" width="32" height="31" rx="3" fill="#1a57bb" />
        <text x="23" y="49.500" textAnchor="middle" fontFamily="Inter" fontWeight="600" fontSize="21" fill="#fff">W</text>
      </App84>
    ),
  },
  {
    art: (
      <svg className="h-[84px] w-[88px] overflow-visible" viewBox="0 0 88 84">
        <path d="M76 8q12 2 12 12v10H76z" fill="#c9c9c9" />
        <path d="M76 30h12v15H76z" fill="#58b6e8" />
        <path d="M76 45h12v15H76z" fill="#f79a2b" />
        <path d="M76 60h12v6q-2 9-12 12z" fill="#48c862" />
        <defs><Grad id="contacts-bg" a="#b58d4d" b="#a0703c" /></defs>
        <rect width="84" height="84" rx="18" fill="url(#contacts-bg)" />
        <circle cx="44" cy="42" r="26" fill="#aa7e45" stroke="#87612f" strokeWidth="1.800" />
        <ellipse cx="44" cy="36" rx="9" ry="10" fill="#94692f" />
        <path d="M27 60q4-10 17-10t17 10q-17 17-34 0z" fill="#94692f" />
      </svg>
    ),
  },
  {
    dot: true,
    art: (
      <App84 id="notes" a="#fafafa" b="#e3e1da">
        <path d="M0 0h84v21H0z" fill="#fecb1d" />
        <path d="M3 25h80" stroke="#b5b5b5" strokeWidth="2" strokeDasharray="2 2" />
        <path d="M0 42h84M0 63h84" stroke="#cfcfcf" strokeWidth="1.800" />
      </App84>
    ),
  },
  {
    art: (
      <App84 id="freeform" a="#ffffff" b="#ffffff">
        <defs>
          <Grad id="blob" a="#ffa62e" b="#ff6a68" />
          <Grad id="sheet" a="#0fdcfd" b="#3aa8e0" />
        </defs>
        <circle cx="33" cy="50" r="24" fill="url(#blob)" />
        <rect x="28" y="11" width="46" height="45" rx="5" fill="url(#sheet)" opacity=".92" />
        <path d="M17 54c4-14 10-24 15-24 6 0-2 20 4 20 5 0 8-20 14-20s0 21 6 20c6 0 8-9 17-12" fill="none" stroke="#083a5c" strokeWidth="4.500" strokeLinecap="round" />
      </App84>
    ),
  },
  {
    dot: true,
    badge: "2",
    art: (
      <App84 id="settings" a="#cfdde6" b="#8d8d8d">
        <circle cx="42" cy="42" r="36" fill="#1f1f1f" />
        <circle cx="42" cy="42" r="31" fill="none" stroke="#8a8a8a" strokeWidth="4" strokeDasharray="1.600 1.600" />
        <circle cx="42" cy="42" r="26.500" fill="#4a4a4a" stroke="#b4b4b4" strokeWidth="4" />
        <circle cx="42" cy="42" r="15" fill="#333" stroke="#8c8c8c" strokeWidth="4.500" />
        <path d="M42 42h26M42 42 29 20M42 42 29 64" stroke="#b8b8b8" strokeWidth="4.500" />
        <circle cx="42" cy="42" r="3.500" fill="#ddd" />
      </App84>
    ),
  },
  {
    dot: true,
    art: (
      <App84 id="chrome" a="#f6f6f6" b="#e9e9e9">
        <circle cx="42" cy="42" r="36" fill="#2ba24c" />
        <path d="M10.800 24A36 36 0 0 1 73.200 24H42L26.400 51z" fill="#e33b2e" />
        <path d="M73.200 24A36 36 0 0 1 42 78L57.600 51 42 24z" fill="#fdbd14" />
        <circle cx="42" cy="42" r="18" fill="#fff" />
        <circle cx="42" cy="42" r="14" fill="#3b7ded" />
      </App84>
    ),
  },
  {
    art: (
      <App84 id="appstore" a="#1bbdf6" b="#1a5fe0">
        <g stroke="#fff" strokeWidth="7" strokeLinecap="round">
          <path d="M46 19 29 49M38 19l27 46M16 52h30M57 52h11M23 60l-3 6" />
        </g>
      </App84>
    ),
  },
  {
    art: (
      <App84 id="music" a="#fd5c74" b="#fb2340">
        <path d="M32 24.500v36M58 19v36" stroke="#fff" strokeWidth="4.500" />
        <path d="M30 20l30-7v12l-30 7z" fill="#fff" />
        <ellipse cx="25" cy="61.500" rx="9" ry="7.500" fill="#fff" />
        <ellipse cx="52" cy="56" rx="8.500" ry="7.500" fill="#fff" />
      </App84>
    ),
  },
];

const recentApps: { check?: boolean; art: ReactNode }[] = [
  {
    check: true,
    art: (
      <App84 id="studio" a="#ffffff" b="#ffffff">
        <path d="M54 36q14-3 16 10 0 12-14 12z" fill="#43a54b" />
        <path d="m66 38 3-5M68 47h5" stroke="#43a54b" strokeWidth="2" />
        <path d="M15 41q5-6 9 2l8 8q10 5 20 0l2 7q-14 5-26-2-14-8-13-15z" fill="#3a7ff0" />
        <path d="M39 10q3-2 6 0v8l20 48-1 9-7-8-15-40-15 40-7 8-1-9 20-48z" fill="#3f82f4" />
        <circle cx="42" cy="25" r="7" fill="#fff" stroke="#1c2430" strokeWidth="4" />
      </App84>
    ),
  },
  {
    art: (
      <div className="flex size-[84px] items-center justify-center rounded-[20px] bg-linear-to-b from-[#fbfcfd] to-[#d9e3f1]">
        <RiOpenaiFill className="size-[68px] text-[#202a33]" />
      </div>
    ),
  },
  {
    art: (
      <App84 id="cursor" a="#000000" b="#000000">
        <path d="M42 12 16 27v30l26 15 26-15V27z" fill="#6e6e6e" />
        <path d="M42 12 16 27h26z" fill="#707070" />
        <path d="M42 12 68 27H42z" fill="#3c3c3c" />
        <path d="M16 27h52L42 72V42z" fill="#ededed" />
        <path d="M16 27l26 15L16 57z" fill="#4c4c4c" />
        <path d="M16 57l26-15v30z" fill="#9d9d9d" />
        <path d="M68 27v30L56 48z" fill="#333" />
        <path d="M68 57 42 72l14-24z" fill="#8a8a8a" />
      </App84>
    ),
  },
  {
    art: (
      <App84 id="excel" a="#ffffff" b="#ffffff">
        <path d="M22 16q0-2 2-2h22v14H22z" fill="#21a366" />
        <path d="M46 14h22q2 0 2 2v12H46z" fill="#33c481" />
        <path d="M22 28h24v14H22z" fill="#107c41" />
        <path d="M46 28h24v14H46z" fill="#21a366" />
        <path d="M22 42h24v14H22z" fill="#185c37" />
        <path d="M46 42h24v14H46z" fill="#107c41" />
        <path d="M22 56h48v11q0 2-2 2H24q-2 0-2-2z" fill="#185c37" />
        <rect x="7" y="26" width="32" height="31" rx="3" fill="#107c41" />
        <text x="23" y="49.500" textAnchor="middle" fontFamily="Inter" fontWeight="600" fontSize="21" fill="#fff">X</text>
      </App84>
    ),
  },
];

function Slot({ dot, badge, check, children }: { dot?: boolean; badge?: string; check?: boolean; children: ReactNode }) {
  return (
    <div className="relative flex h-[110px] w-[84px] shrink-0 flex-col">
      <div className="h-[84px]">{children}</div>
      {dot && <i className="mx-auto mt-[18px] size-[8px] shrink-0 rounded-full bg-[#9b9b9b]" />}
      {badge && (
        <span className="absolute -top-[10px] left-[58px] flex size-[40px] items-center justify-center rounded-full bg-[#f03a30] text-[23px] text-white">{badge}</span>
      )}
      {check && (
        <svg className="absolute -top-[10px] left-[54px] size-[38px]" viewBox="0 0 38 38">
          <circle cx="19" cy="19" r="18.500" fill="#18a512" />
          <path d="m10 18 7 8 12-15" fill="none" stroke="#fff" strokeWidth="5" />
        </svg>
      )}
    </div>
  );
}

function Dock() {
  return (
    <div className="mt-[8px] ml-[95px] flex h-[134px] w-[2691px] shrink-0 rounded-[44px] border-2 border-[#343434] bg-[#111111] pt-[18px] pl-[17px]">
      <div className="flex gap-[28.13px]">
        {mainApps.map((a, i) => (
          <Slot key={i} dot={a.dot} badge={a.badge}>{a.art}</Slot>
        ))}
      </div>
      <i className="-mt-[2px] ml-[40px] h-[98px] w-[2px] bg-[#4a4a4a]" />
      <div className="ml-[36px] flex gap-[28px]">
        {recentApps.map((a, i) => (
          <Slot key={i} dot check={a.check}>{a.art}</Slot>
        ))}
      </div>
      <i className="-mt-[2px] ml-[40px] h-[98px] w-[2px] bg-[#4a4a4a]" />
      <svg className="ml-[36px] h-[86px] w-[88px]" viewBox="0 0 88 86">
        <path d="M9 4q0-4 4-4h14q3 0 5 3l3 3h40q4 0 4 4v20H9z" fill="#2b9fd8" />
        <path d="M4 10q0-4 4-4h18q3 0 5 3l3 3h45q4 0 4 4v20H4z" fill="#33a9e2" />
        <path d="M1 16q0-4 4-4h18q3 0 5 3l3 3h50q5 0 5 5v20H1z" fill="#2299d6" />
        <rect y="23" width="88" height="62" rx="5" fill="#5fcbfd" />
        <path d="M0 78h88v2q0 5-5 5H5q-5 0-5-5z" fill="#2fa6e2" />
      </svg>
      <svg className="mt-[1px] ml-[25px] h-[80px] w-[88px]" viewBox="0 0 88 80">
        <path d="M10 1h52l12 14v15H10z" fill="#ececec" />
        <path d="M14 5h24M14 5v4" stroke="#444" strokeWidth="2" />
        <path d="M5 9h60v4H5z" fill="#e6e23a" />
        <path d="M8 10.500h52" stroke="#7a7820" strokeWidth="2.500" strokeDasharray="14 3" />
        <path d="M0 14h62l26 24v40H0z" fill="#f4f4f4" />
        <path d="M0 26h68v7H0z" fill="#5d9fb5" />
        <path d="M11 34v43M23 34v43M38 34v43" stroke="#aaa" strokeWidth="4.500" strokeDasharray="8 1" />
        <path d="M52 34v43M66 38v39M0 44h88M0 54h88M0 64h88" stroke="#d2d2d2" strokeWidth="1" />
        <path d="M2 17h16" stroke="#e39a9a" strokeWidth="1.500" />
        <path d="M62 1q6 20 4 36 10-3 22 1Q82 12 62 1z" fill="#fff" stroke="#bbb" strokeWidth="1" />
      </svg>
      <svg className="-mt-[4px] ml-[29px] h-[94px] w-[76px]" viewBox="0 0 76 94">
        <defs>
          <linearGradient id="bin" x1="0" x2="1">
            <stop offset="0" stopColor="#51585d" />
            <stop offset=".5" stopColor="#6b7276" />
            <stop offset="1" stopColor="#4a5156" />
          </linearGradient>
        </defs>
        <path d="M1 10 11 84q3 8 27 8t27-8L75 10z" fill="url(#bin)" />
        <ellipse cx="38" cy="10" rx="37.500" ry="9" fill="#43494d" stroke="#70777b" strokeWidth="1.500" />
        <path d="M11 80q4-6 12-2l-2 12q-9-2-10-6z" fill="#a9afb3" opacity=".5" />
      </svg>
    </div>
  );
}

export default function App() {
  return (
    <div className="flex h-[1800px] w-[2880px] flex-col overflow-hidden bg-black font-['Inter',sans-serif]">
      <MenuBar />
      <main className="relative ml-[2px] flex h-[1586px] w-[2878px] shrink-0 flex-col overflow-hidden rounded-t-[20px] rounded-br-[22px] bg-white pt-[2px]">
        <TabStrip />
        <Toolbar />
        <IpsosHeader />
        <Nav />
        <Breadcrumb />
        <FilterForm />
        <div className="mt-auto h-[66px] bg-linear-to-b from-white to-[#e9e9e9]" />
        <div className="absolute bottom-0 left-0 flex h-[43px] w-[807px] items-center rounded-tr-[8px] border-t-2 border-r-2 border-[#8b8b8b] border-r-[#3a3a3a] bg-[#1f2120] pl-[10px]">
          <T w={783} className="text-[24px] text-[#c7c7c7]">
            https://ifieldtr.ipsos.com/document.asp?alias=smngr.surveyexplorer#
          </T>
        </div>
        <i className="pointer-events-none absolute inset-x-0 top-0 bottom-[20px] rounded-t-[20px] border-x-2 border-t-2 border-[#8a8a8a]/60 border-t-[#666666]" />
      </main>
      <div className="ml-[2px] h-[12px] w-[2725px] shrink-0 rounded-b-[16px] border-b-2 border-[#1e1e1e] bg-[#070909]" />
      <Dock />
    </div>
  );
}
